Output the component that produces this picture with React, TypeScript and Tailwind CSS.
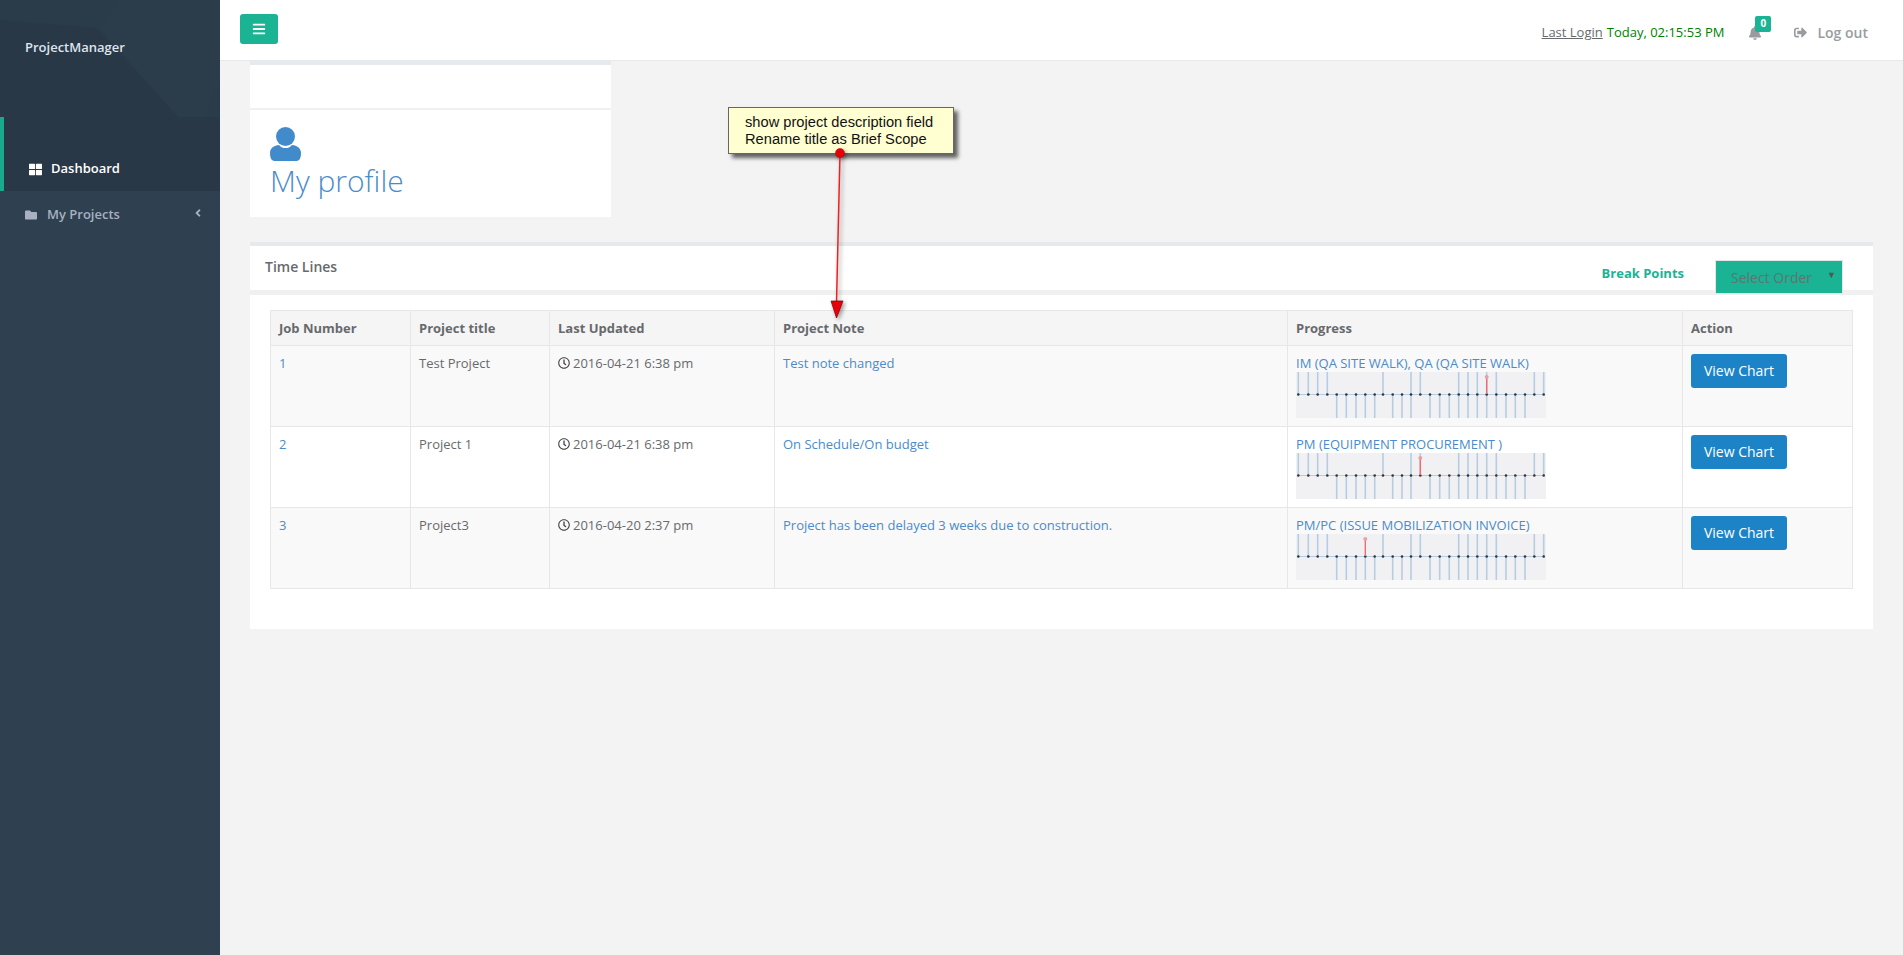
import { FaBars, FaBell, FaFolder, FaRegClock, FaSignOutAlt, FaThLarge, FaAngleLeft } from "react-icons/fa";

const font = "font-['Open_Sans',sans-serif]";

// tick positions along the timeline, px from the chart's left edge
const ticks = [2.3, 12.3, 21.7, 31.3, 40.7, 50.3, 60, 69.3, 78.7, 87, 96.7, 106, 115, 124.3, 134, 143.7, 153.3, 162.7, 172, 181.3, 190.7, 200.3, 210, 219.3, 229, 238.3, 247.7];
const upTicks = [0, 1, 2, 3, 9, 12, 13, 17, 18, 19, 20, 21, 25, 26];
const downTicks = [4, 5, 6, 7, 8, 10, 11, 12, 14, 15, 16, 17, 18, 19, 20, 21, 22, 23, 24];

function TimelineChart({ current }: { current: number }) {
  return (
    <svg width="250" height="46" viewBox="0 0 250 46" className="block">
      <rect width="250" height="46" fill="#f1f1f4" />
      <line x1="2" y1="22.5" x2="248" y2="22.5" stroke="#b4cde2" strokeWidth="1" />
      {upTicks.map((i) => (
        <line key={`u${i}`} x1={ticks[i]} y1="0" x2={ticks[i]} y2="22" stroke="#b4cde2" strokeWidth="1.6" />
      ))}
      {downTicks.map((i) => (
        <line key={`d${i}`} x1={ticks[i]} y1="23" x2={ticks[i]} y2="46" stroke="#b4cde2" strokeWidth="1.6" />
      ))}
      {ticks.map((x, i) => (
        <circle key={i} cx={x} cy="22.5" r="1.3" fill="#333" />
      ))}
      <line x1={ticks[current]} y1="4" x2={ticks[current]} y2="22" stroke="#ef6b74" strokeWidth="1.4" />
      <circle cx={ticks[current]} cy="5" r="2" fill="#e8a0a6" />
    </svg>
  );
}

const rows = [
  { id: "1", title: "Test Project", updated: "2016-04-21 6:38 pm", note: "Test note changed", progress: "IM (QA SITE WALK), QA (QA SITE WALK)", current: 20 },
  { id: "2", title: "Project 1", updated: "2016-04-21 6:38 pm", note: "On Schedule/On budget", progress: "PM (EQUIPMENT PROCUREMENT )", current: 13 },
  { id: "3", title: "Project3", updated: "2016-04-20 2:37 pm", note: "Project has been delayed 3 weeks due to construction.", progress: "PM/PC (ISSUE MOBILIZATION INVOICE)", current: 7 },
];

export default function App() {
  return (
    <div className={`${font} relative flex min-h-[955px] bg-[#f3f3f4] text-[13px] text-[#676a6c]`}>
      {/* Sidebar */}
      <aside className="w-[220px] shrink-0 bg-[#2f4050]">
        <div className="relative h-[117px] overflow-hidden bg-[#2a3b4a]">
          <svg className="absolute inset-0" width="220" height="117" viewBox="0 0 220 117">
            <polygon points="0,20 97,28 178,117 0,117" fill="#283847" />
            <polygon points="100,28 120,0 220,0 220,80 205,117 178,117" fill="#2b3c4b" />
          </svg>
          <div className="relative pl-[25px] pt-[38px] font-semibold text-[#dfe4ed]">ProjectManager</div>
        </div>
        <div className="flex h-[74px] items-center border-l-4 border-[#19aa8d] bg-[#293846] pl-[25px] pt-[30px] font-semibold text-white">
          <FaThLarge className="mr-[9px] text-[13px]" />
          Dashboard
        </div>
        <div className="flex h-[46px] items-center pl-[25px] pr-[16px] pt-[1px] font-semibold text-[#a7b1c2]">
          <FaFolder className="mr-[10px] text-[12px]" />
          <span className="flex-1">My Projects</span>
          <FaAngleLeft className="mb-[4px] text-[12px]" />
        </div>
      </aside>

      <main className="min-w-0 flex-1">
        {/* Top bar */}
        <header className="flex h-[61px] items-start border-b border-[#e7eaec] bg-white pl-[20px] pr-[35px]">
          <button className="mt-[14px] flex h-[30px] w-[38px] items-center justify-center rounded-[3px] bg-[#1ab394] text-white">
            <FaBars className="text-[14px]" />
          </button>
          <div className="ml-auto flex items-center pt-[22px]">
            <span className="underline">Last Login</span>
            <span className="ml-[4px] text-[#008000]">Today, 02:15:53 PM</span>
            <div className="relative ml-[24px] text-[#999c9e]">
              <FaBell className="text-[14px]" />
              <span className="absolute left-[7px] top-[-10px] flex h-[16px] w-[16px] items-center justify-center rounded-[2px] bg-[#1ab394] text-[10px] font-bold text-white">0</span>
            </div>
            <FaSignOutAlt className="ml-[32px] text-[13px] text-[#999c9e]" />
            <span className="ml-[10px] text-[14px] font-semibold text-[#999c9e]">Log out</span>
          </div>
        </header>

        <div className="px-[30px]">
          {/* Profile block */}
          <div className="w-[361px] border-t-4 border-[#e7eaec] bg-white">
            <div className="h-[45px] border-b-2 border-[#f0f0f1]" />
            <div className="h-[107px] pl-[20px] pt-[17px]">
              <svg width="31" height="34" viewBox="0 0 31 34" className="block" fill="#428bca">
                <circle cx="15.5" cy="9.5" r="9.5" />
                <path d="M9 18c2 2.500 4 3 6.500 3s4.500-.5 6.500-3c5 .5 9 3 9 8 0 3-.5 5-1.500 6.500-1 1-2.500 1.500-4 1.500H5.500c-1.500 0-3-.5-4-1.500C.5 31 0 29 0 26c0-5 4-7.500 9-8z" />
              </svg>
              <h1 className="mt-[2px] text-[30px] font-light leading-[36px] text-[#4a8bcb]">My profile</h1>
            </div>
          </div>

          {/* Time lines */}
          <section className="mt-[25px] bg-white pb-[40px]">
            <div className="relative h-[53px] border-b-[5px] border-[#f0f0f1] border-t-4 border-t-[#e7eaec] bg-white">
              <div className="pl-[15px] pt-[10px] text-[14px] font-semibold">Time Lines</div>
              <div className="absolute right-[189px] top-[18px] font-bold text-[#1ab394]">Break Points</div>
              <div className="absolute right-[30px] top-[14px] flex h-[34px] w-[128px] items-center justify-between border border-[#e5e6e7] bg-[#1ab394] pl-[15px] pr-[6px] text-[14px] text-[#5f7571]">
                Select Order
                <span className="mb-[4px] text-[9px] text-[#555]">▼</span>
              </div>
            </div>
            <div className="px-[20px] pt-[15px]">
              <table className="w-full table-fixed border-collapse leading-[18px]">
                <colgroup>
                  <col className="w-[140px]" />
                  <col className="w-[139px]" />
                  <col className="w-[225px]" />
                  <col className="w-[513px]" />
                  <col className="w-[395px]" />
                  <col />
                </colgroup>
                <thead>
                  <tr className="h-[35px] bg-[#f5f5f6] text-left">
                    {["Job Number", "Project title", "Last Updated", "Project Note", "Progress", "Action"].map((h) => (
                      <th key={h} className="border border-[#e7e7e7] px-[8px] font-bold">{h}</th>
                    ))}
                  </tr>
                </thead>
                <tbody>
                  {rows.map((r, i) => (
                    <tr key={r.id} className={i === 1 ? "h-[81px] bg-white" : "h-[81px] bg-[#f9f9f9]"}>
                      <td className="border border-[#e7e7e7] p-[8px] align-top text-[#4a8bcb]">{r.id}</td>
                      <td className="border border-[#e7e7e7] p-[8px] align-top">{r.title}</td>
                      <td className="border border-[#e7e7e7] p-[8px] align-top">
                        <FaRegClock className="mr-[3px] inline-block align-[-1px] text-[12px] text-[#444]" />
                        {r.updated}
                      </td>
                      <td className="border border-[#e7e7e7] p-[8px] align-top text-[#4a8bcb]">{r.note}</td>
                      <td className="border border-[#e7e7e7] p-[8px] align-top text-[#4a8bcb]">
                        {r.progress}
                        <TimelineChart current={r.current} />
                      </td>
                      <td className="border border-[#e7e7e7] p-[8px] align-top">
                        <button className="h-[34px] w-[96px] rounded-[3px] bg-[#1c84c6] text-[14px] text-white">View Chart</button>
                      </td>
                    </tr>
                  ))}
                </tbody>
              </table>
            </div>
          </section>
        </div>
      </main>

      {/* Annotation laid over the page */}
      <div className="absolute left-[728px] top-[107px] h-[47px] w-[226px] border border-[#666] bg-[#ffffd2] pl-[16px] pt-[6px] font-['Liberation_Sans',sans-serif] text-[14.67px] leading-[17px] text-[#111] shadow-[4px_4px_4px_rgba(0,0,0,0.6)]">
        show project description field
        <br />
        Rename title as Brief Scope
      </div>
      <svg className="pointer-events-none absolute left-[820px] top-[145px] drop-shadow-[2px_2px_2px_rgba(0,0,0,0.4)]" width="40" height="180" viewBox="0 0 40 180">
        <line x1="20" y1="8" x2="16.5" y2="158" stroke="#f02020" strokeWidth="1.5" />
        <circle cx="20" cy="8" r="4.500" fill="#e8000b" stroke="#a00000" strokeWidth="0.5" />
        <polygon points="11,156 23,156 16.500,173" fill="#e8000b" stroke="#800000" strokeWidth="0.7" />
      </svg>
    </div>
  );
}
